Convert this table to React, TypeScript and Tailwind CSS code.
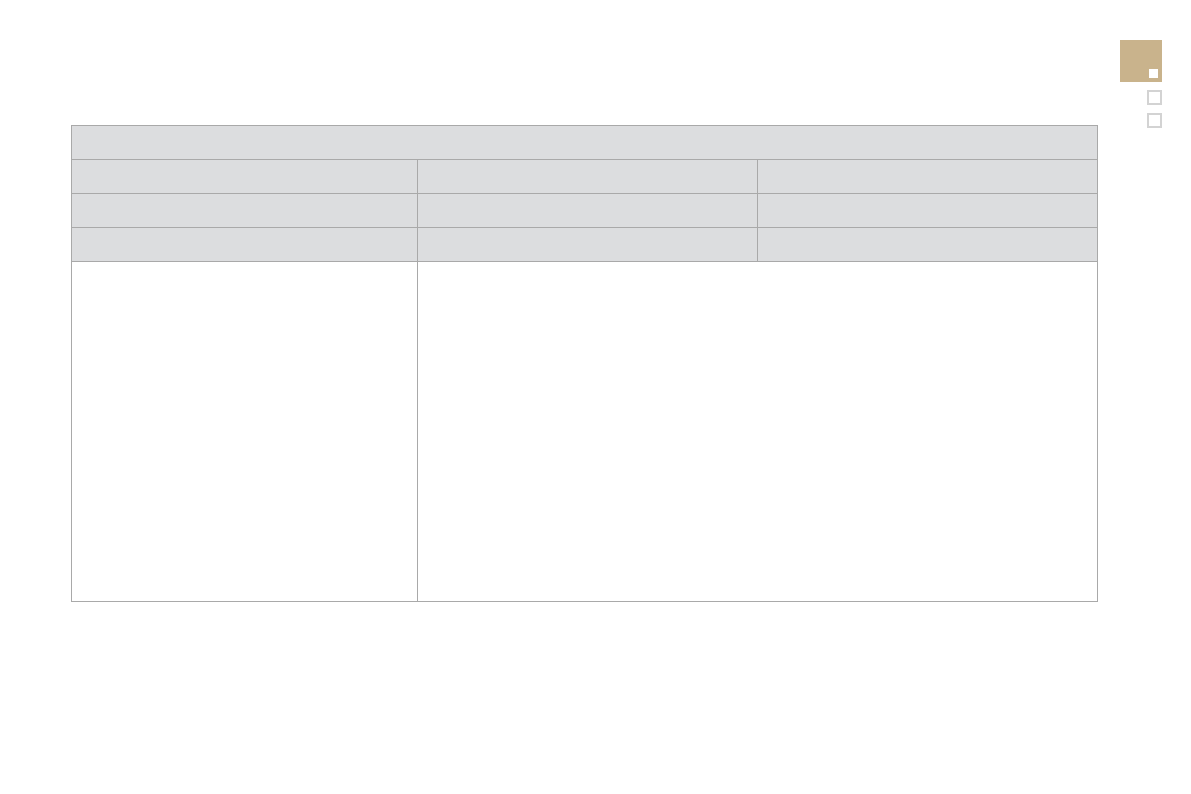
export default function App() {
  const line = 'border-[#a9a9a9]';
  return (
    <div className="min-h-[794px] w-full bg-white flex items-start pl-[71px]">
      <div className={`mt-[125px] w-[1027px] border ${line} flex flex-col`}>
        <div className={`h-[34px] bg-[#dcdddf] border-b ${line}`}></div>
        {[0, 1, 2].map((i) => (
          <div key={i} className={`h-[34px] flex bg-[#dcdddf] border-b ${line}`}>
            <div className={`w-[346px] border-r ${line}`}></div>
            <div className={`w-[340px] border-r ${line}`}></div>
            <div className="flex-1"></div>
          </div>
        ))}
        <div className="h-[339px] flex">
          <div className={`w-[346px] border-r ${line}`}></div>
          <div className="flex-1"></div>
        </div>
      </div>
      <div className="ml-[22px] mt-[40px] w-[42px] flex flex-col items-end">
        <div className="w-[42px] h-[42px] bg-[#c9b38c] flex items-end justify-end pr-[4px] pb-[4px]">
          <div className="w-[9px] h-[9px] bg-white"></div>
        </div>
        <div className="mt-[8px] w-[15px] h-[15px] border-2 border-[#d3d3d3]"></div>
        <div className="mt-[8px] w-[15px] h-[15px] border-2 border-[#d3d3d3]"></div>
      </div>
    </div>
  );
}
